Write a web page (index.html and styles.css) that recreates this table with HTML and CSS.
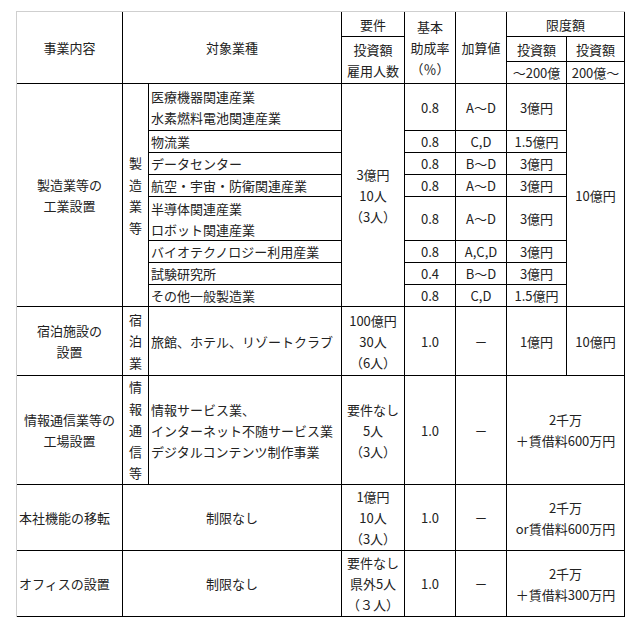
FILE: index.html
```html
<!DOCTYPE html>
<html lang="ja">
<head>
<meta charset="utf-8">
<title>事業内容と限度額</title>
<link rel="stylesheet" href="styles.css">
</head>
<body>
<table class="grid">
  <colgroup>
    <col class="c-biz">
    <col class="c-cat">
    <col class="c-ind">
    <col class="c-req">
    <col class="c-rate">
    <col class="c-add">
    <col class="c-lim1">
    <col class="c-lim2">
  </colgroup>
  <thead>
    <tr class="h-a">
      <th rowspan="3">事業内容</th>
      <th colspan="2" rowspan="3">対象業種</th>
      <th>要件</th>
      <th rowspan="3">基本<br>助成率<br>（％）</th>
      <th rowspan="3">加算値</th>
      <th colspan="2">限度額</th>
    </tr>
    <tr class="h-b">
      <th rowspan="2">投資額<br>雇用人数</th>
      <th>投資額</th>
      <th>投資額</th>
    </tr>
    <tr class="h-c">
      <th>～200億</th>
      <th>200億～</th>
    </tr>
  </thead>
  <tbody>
    <tr class="r-47">
      <td rowspan="8">製造業等の<br>工業設置</td>
      <td rowspan="8" class="vert">製<br>造<br>業<br>等</td>
      <td class="left">医療機器関連産業<br>水素燃料電池関連産業</td>
      <td rowspan="8">3億円<br>10人<br>（3人）</td>
      <td>0.8</td>
      <td>A～D</td>
      <td>3億円</td>
      <td rowspan="8">10億円</td>
    </tr>
    <tr class="r-22">
      <td class="left">物流業</td>
      <td>0.8</td>
      <td>C,D</td>
      <td>1.5億円</td>
    </tr>
    <tr class="r-22">
      <td class="left">データセンター</td>
      <td>0.8</td>
      <td>B～D</td>
      <td>3億円</td>
    </tr>
    <tr class="r-22">
      <td class="left">航空・宇宙・防衛関連産業</td>
      <td>0.8</td>
      <td>A～D</td>
      <td>3億円</td>
    </tr>
    <tr class="r-44">
      <td class="left">半導体関連産業<br>ロボット関連産業</td>
      <td>0.8</td>
      <td>A～D</td>
      <td>3億円</td>
    </tr>
    <tr class="r-22">
      <td class="left">バイオテクノロジー利用産業</td>
      <td>0.8</td>
      <td>A,C,D</td>
      <td>3億円</td>
    </tr>
    <tr class="r-22">
      <td class="left">試験研究所</td>
      <td>0.4</td>
      <td>B～D</td>
      <td>3億円</td>
    </tr>
    <tr class="r-21">
      <td class="left">その他一般製造業</td>
      <td>0.8</td>
      <td>C,D</td>
      <td>1.5億円</td>
    </tr>
    <tr class="r-69">
      <td>宿泊施設の<br>設置</td>
      <td class="vert">宿<br>泊<br>業</td>
      <td class="left">旅館、ホテル、リゾートクラブ</td>
      <td>100億円<br>30人<br>（6人）</td>
      <td>1.0</td>
      <td>－</td>
      <td>1億円</td>
      <td>10億円</td>
    </tr>
    <tr class="r-109">
      <td>情報通信業等の<br>工場設置</td>
      <td class="vert">情<br>報<br>通<br>信<br>等</td>
      <td class="left">情報サービス業、<br>インターネット不随サービス業<br>デジタルコンテンツ制作事業</td>
      <td>要件なし<br>5人<br>（3人）</td>
      <td>1.0</td>
      <td>－</td>
      <td colspan="2">2千万<br>＋賃借料600万円</td>
    </tr>
    <tr class="r-66">
      <td class="left">本社機能の移転</td>
      <td colspan="2">制限なし</td>
      <td>1億円<br>10人<br>（3人）</td>
      <td>1.0</td>
      <td>－</td>
      <td colspan="2">2千万<br>or賃借料600万円</td>
    </tr>
    <tr class="r-66">
      <td class="left">オフィスの設置</td>
      <td colspan="2">制限なし</td>
      <td>要件なし<br>県外5人<br>（３人）</td>
      <td>1.0</td>
      <td>－</td>
      <td colspan="2">2千万<br>＋賃借料300万円</td>
    </tr>
  </tbody>
</table>
</body>
</html>
```
FILE: styles.css
```css
html, body {
  margin: 0;
  background: #ffffff;
}

body {
  padding: 11px 0 0 16px;
  font-family: "Noto Sans CJK JP", "Noto Sans", sans-serif;
  font-size: 13px;
  color: #222222;
}

.grid {
  box-sizing: border-box;
  width: 609px;
  table-layout: fixed;
  border-collapse: separate;
  border-spacing: 0;
  border-top: 1px solid #cfcfcf;
  border-left: 1px solid #cfcfcf;
}

.c-biz { width: 106px; }
.c-cat { width: 26px; }
.c-ind { width: 193px; }
.c-req { width: 63px; }
.c-rate { width: 51px; }
.c-add { width: 51px; }
.c-lim1 { width: 60px; }
.c-lim2 { width: 58px; }

.grid th,
.grid td {
  padding: 0 2px;
  border-right: 1px solid #000;
  border-bottom: 1px solid #000;
  text-align: center;
  vertical-align: middle;
  white-space: nowrap;
  overflow: hidden;
  line-height: 21px;
}

.grid th {
  font-weight: normal;
}

.grid td.left {
  text-align: left;
}

.grid td.vert {
  padding: 0;
  line-height: 21.5px;
}

.h-a { height: 25px; }
.h-b { height: 25px; }
.h-c { height: 22px; }

.r-21 { height: 21px; }
.r-22 { height: 22px; }
.r-44 { height: 44px; }
.r-47 { height: 47px; }
.r-66 { height: 66px; }
.r-69 { height: 69px; }
.r-109 { height: 109px; }
```
